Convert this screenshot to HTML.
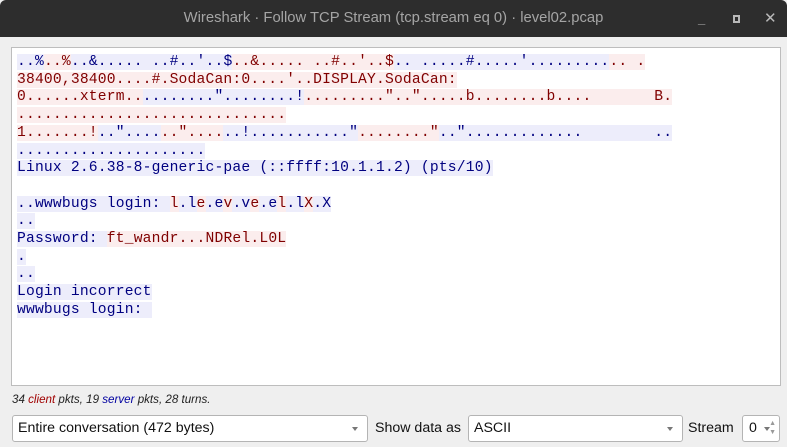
<!DOCTYPE html>
<html><head><meta charset="utf-8"><style>
*{margin:0;padding:0;box-sizing:border-box}
body{width:787px;height:447px;background:#efefef;position:relative;overflow:hidden;font-family:"Liberation Sans",sans-serif}
#tb{position:absolute;left:0;top:0;width:787px;height:37px;background:#2d2d2d;border-radius:6px 6px 0 0;color:#a5a5a5;font-size:14.8px;text-align:center;line-height:37px}
.wb{position:absolute;top:0;height:37px;line-height:37px;color:#b8b8b8;font-size:13px}
#ta{position:absolute;left:11px;top:47px;width:770px;height:339px;background:#fff;border:1px solid #bdbdbd}
pre{position:absolute;left:5px;top:6px;font-family:"Liberation Mono",monospace;font-size:14.67px;letter-spacing:0.18px;line-height:17.7px;white-space:pre}
.c{background:#fbeded;color:#800000}
.s{background:#ededfb;color:#000080}
.st{position:absolute;left:12px;top:393px;font-size:11.6px;font-style:italic;color:#222}
.cb{position:absolute;top:415px;height:27px;background:#fff;border:1px solid #b4b4b4;border-radius:3px;font-size:14.2px;line-height:25px;padding-left:5px;color:#111}
.cb:after{content:"";position:absolute;right:9px;top:11px;border-left:3.5px solid transparent;border-right:3.5px solid transparent;border-top:4px solid #777}
.lb{position:absolute;top:415px;line-height:27px;font-size:14.2px;color:#111}
</style></head><body>
<div id="tb">Wireshark · Follow TCP Stream (tcp.stream eq 0) · level02.pcap</div>
<div class="wb" style="left:698px;font-weight:bold">_</div>
<div style="position:absolute;left:733px;top:15px;width:7px;height:8px;border:2px solid #b8b8b8"></div>
<div class="wb" style="left:764px;font-size:15px">✕</div>
<div id="ta"><pre><span class="s">..%</span><span class="c">..%</span><span class="s">..&amp;..... ..#..'..$</span><span class="c">..&amp;..... ..#..'..$</span><span class="s">.. .....#.....'.........</span><span class="c">.. .</span>
<span class="c">38400,38400....#.SodaCan:0....'..DISPLAY.SodaCan:</span>
<span class="c">0......xterm..</span><span class="s">........"........!</span><span class="c">........."..".....b........b....       B.</span>
<span class="c">..............................</span>
<span class="c">1.......!</span><span class="s">.."....</span><span class="c">.."....</span><span class="s">..!..........."</span><span class="c">........"</span><span class="s">..".............        ..</span>
<span class="s">.....................</span>
<span class="s">Linux 2.6.38-8-generic-pae (::ffff:10.1.1.2) (pts/10)</span>

<span class="s">..wwwbugs login: </span><span class="c">l</span><span class="s">.l</span><span class="c">e</span><span class="s">.e</span><span class="c">v</span><span class="s">.v</span><span class="c">e</span><span class="s">.e</span><span class="c">l</span><span class="s">.l</span><span class="c">X</span><span class="s">.X</span>
<span class="s">..</span>
<span class="s">Password: </span><span class="c">ft_wandr...NDRel.L0L</span>
<span class="s">.</span>
<span class="s">..</span>
<span class="s">Login incorrect</span>
<span class="s">wwwbugs login: </span></pre></div>
<div class="st">34 <span style="color:#a00000">client</span> pkts, 19 <span style="color:#0000a0">server</span> pkts, 28 turns.</div>
<div class="cb" style="left:12px;width:356px">Entire conversation (472 bytes)</div>
<div class="lb" style="left:375px">Show data as</div>
<div class="cb" style="left:468px;width:215px">ASCII</div>
<div class="lb" style="left:688px">Stream</div>
<div class="cb" style="left:742px;width:38px;padding-left:6px">0<span style="position:absolute;right:3px;top:3px;font-size:7px;line-height:9px;color:#999">▲<br>▼</span></div>
</body></html>
